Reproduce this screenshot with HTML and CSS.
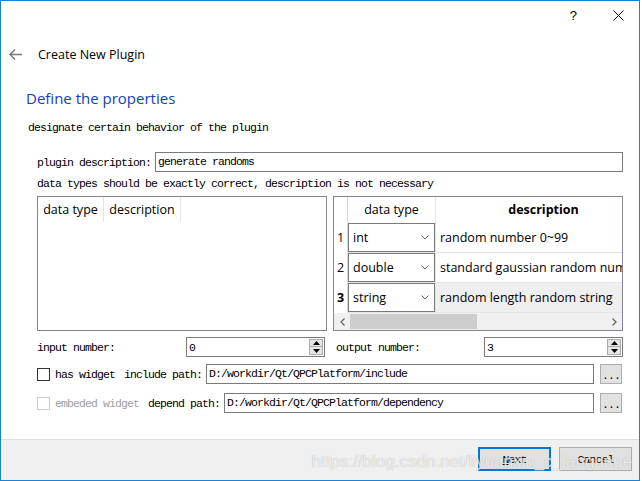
FILE: index.html
```html
<!DOCTYPE html>
<html>
<head>
<meta charset="utf-8">
<link rel="stylesheet" href="styles.css">
</head>
<body>
<div class="window">
  <div class="titlebar">
    <span class="tb-help">?</span>
    <svg class="tb-close" width="11" height="11" viewBox="0 0 11 11"><path d="M0.5 0.5 L10.5 10.5 M10.5 0.5 L0.5 10.5" stroke="#000" stroke-width="1" fill="none"/></svg>
  </div>
  <div class="nav">
    <svg class="back" width="13" height="11" viewBox="0 0 13 11"><path d="M1 5.5 H13 M6 0.5 L1 5.5 L6 10.5" stroke="#7a7a7a" stroke-width="1.5" fill="none"/></svg>
    <span class="nav-title">Create New Plugin</span>
  </div>
  <h1 class="heading">Define the properties</h1>
  <p class="subtitle mono">designate certain behavior of the plugin</p>
  <div class="form">
    <div class="desc-row">
      <span class="mono">plugin description:</span>
      <div class="input mono">generate randoms</div>
    </div>
    <div class="note mono">data types should be exactly correct, description is not necessary</div>
    <div class="tables">
      <div class="tbl">
        <div class="lt-head">
          <div class="lt-h1">data type</div>
          <div class="lt-h2">description</div>
        </div>
      </div>
      <div class="tbl rt">
        <div class="rt-head">
          <div class="rt-corner"></div>
          <div class="rt-c1">data type</div>
          <div class="rt-c2">description</div>
        </div>
        <div class="rt-row">
          <div class="rt-v">1</div>
          <div class="rt-combo-cell"><div class="combo"><span>int</span><svg width="8" height="5" viewBox="0 0 8 5"><path d="M0.5 0.5 L4 4 L7.5 0.5" stroke="#6b6b6b" stroke-width="1" fill="none"/></svg></div></div>
          <div class="rt-desc">random number 0~99</div>
        </div>
        <div class="rt-row">
          <div class="rt-v">2</div>
          <div class="rt-combo-cell"><div class="combo"><span>double</span><svg width="8" height="5" viewBox="0 0 8 5"><path d="M0.5 0.5 L4 4 L7.5 0.5" stroke="#6b6b6b" stroke-width="1" fill="none"/></svg></div></div>
          <div class="rt-desc">standard gaussian random number</div>
        </div>
        <div class="rt-row current">
          <div class="rt-v">3</div>
          <div class="rt-combo-cell"><div class="combo"><span>string</span><svg width="8" height="5" viewBox="0 0 8 5"><path d="M0.5 0.5 L4 4 L7.5 0.5" stroke="#6b6b6b" stroke-width="1" fill="none"/></svg></div></div>
          <div class="rt-desc">random length random string</div>
        </div>
        <div class="hscroll">
          <div class="sb-btn"><svg width="5" height="8" viewBox="0 0 5 8"><path d="M4.5 0.5 L1 4 L4.5 7.5" stroke="#606060" stroke-width="1.2" fill="none"/></svg></div>
          <div class="sb-thumb"></div>
          <div class="sb-track"></div>
          <div class="sb-btn"><svg width="5" height="8" viewBox="0 0 5 8"><path d="M0.5 0.5 L4 4 L0.5 7.5" stroke="#606060" stroke-width="1.2" fill="none"/></svg></div>
        </div>
      </div>
    </div>
    <div class="spin-row">
      <div class="spin-cell">
        <span class="mono">input number:</span>
        <div class="spin left-spin"><span class="mono">0</span>
          <div class="spin-btns">
            <div class="spin-b"><svg width="7" height="4" viewBox="0 0 7 4"><path d="M0 4 L3.5 0 L7 4 Z" fill="#000"/></svg></div>
            <div class="spin-b"><svg width="7" height="4" viewBox="0 0 7 4"><path d="M0 0 L3.5 4 L7 0 Z" fill="#000"/></svg></div>
          </div>
        </div>
      </div>
      <div class="spin-cell">
        <span class="mono out-label">output number:</span>
        <div class="spin"><span class="mono">3</span>
          <div class="spin-btns">
            <div class="spin-b"><svg width="7" height="4" viewBox="0 0 7 4"><path d="M0 4 L3.5 0 L7 4 Z" fill="#000"/></svg></div>
            <div class="spin-b"><svg width="7" height="4" viewBox="0 0 7 4"><path d="M0 0 L3.5 4 L7 0 Z" fill="#000"/></svg></div>
          </div>
        </div>
      </div>
    </div>
    <div class="path-row first">
      <span class="check"></span>
      <span class="mono">has widget</span>
      <span class="mono path-label">include path:</span>
      <div class="input mono">D:/workdir/Qt/QPCPlatform/include</div>
      <div class="dots mono">...</div>
    </div>
    <div class="path-row second">
      <span class="check disabled"></span>
      <span class="mono disabled-text">embeded widget</span>
      <span class="mono path-label">depend path:</span>
      <div class="input mono">D:/workdir/Qt/QPCPlatform/dependency</div>
      <div class="dots mono">...</div>
    </div>
  </div>
  <div class="spacer"></div>
  <div class="footer">
    <div class="btn default mono"><span><u>N</u>ext</span></div>
    <div class="btn mono">Cancel</div>
  </div>
  <div class="watermark">https://blog.csdn.net/liyuanxin_c_language</div>
</div>
</body>
</html>
```

FILE: styles.css
```css
* { box-sizing: border-box; }
html, body { margin: 0; padding: 0; background: #fff; }

.window {
  width: 640px;
  height: 481px;
  border: 1px solid #1883d7;
  display: flex;
  flex-direction: column;
  position: relative;
  overflow: hidden;
  background: #fff;
  color: #000;
  font-family: "Open Sans", "Noto Sans", sans-serif;
  font-size: 12.5px;
}

.mono {
  font-family: "Liberation Mono", "DejaVu Sans Mono", monospace;
  font-size: 11.5px;
  letter-spacing: -0.9px;
  white-space: pre;
}

.titlebar {
  height: 29px;
  flex: none;
  display: flex;
  justify-content: flex-end;
  align-items: center;
  padding-right: 15px;
}
.tb-help {
  font-family: "Liberation Sans", sans-serif;
  font-size: 13px;
  margin-right: 36px;
  line-height: 13px;
}

.nav {
  height: 48px;
  flex: none;
  display: flex;
  align-items: center;
  padding-left: 8px;
}
.back { margin-right: 16px; }
.nav-title { font-size: 12.5px; }

.heading {
  margin: 0;
  height: 40px;
  flex: none;
  line-height: 40px;
  padding-left: 25px;
  font-size: 15px;
  font-weight: normal;
  color: #1240c0;
}

.subtitle {
  margin: 0;
  height: 20px;
  flex: none;
  line-height: 20px;
  padding-left: 27px;
}

.form {
  flex: none;
  margin-left: 36px;
  width: 586px;
  margin-top: 14px;
}

.desc-row {
  height: 20px;
  display: flex;
  align-items: center;
  gap: 4px;
}

.input {
  flex: 1;
  height: 20px;
  border: 1px solid #7a7a7a;
  padding-left: 2px;
  line-height: 18px;
  background: #fff;
  overflow: hidden;
}

.note {
  height: 24px;
  line-height: 24px;
}

.tables {
  display: grid;
  grid-template-columns: 290px 290px;
  gap: 6px;
  height: 135px;
}

.tbl {
  border: 1px solid #828790;
  background: #fff;
  overflow: hidden;
}

.lt-head {
  display: flex;
  height: 25px;
}
.lt-h1, .lt-h2 {
  line-height: 25px;
  text-align: center;
  border-right: 1px solid #e5e5e5;
}
.lt-h1 { width: 66px; }
.lt-h2 { width: 77px; }

.rt { display: flex; flex-direction: column; }
.rt-head {
  display: flex;
  height: 26px;
  flex: none;
}
.rt-corner {
  width: 14px;
  flex: none;
  border-right: 1px solid #d9d9d9;
}
.rt-c1 {
  width: 88px;
  flex: none;
  text-align: center;
  line-height: 26px;
  border-right: 1px solid #e5e5e5;
}
.rt-c2 {
  width: 215px;
  flex: none;
  text-align: center;
  line-height: 26px;
  font-weight: bold;
}

.rt-row {
  display: flex;
  height: 30px;
  flex: none;
}
.rt-v {
  width: 14px;
  flex: none;
  text-align: center;
  line-height: 30px;
  border-right: 1px solid #d9d9d9;
}
.current .rt-v { font-weight: bold; }
.rt-combo-cell {
  width: 88px;
  flex: none;
  border-right: 1px solid #e5e5e5;
  border-bottom: 1px solid #e5e5e5;
}
.combo {
  height: 29px;
  border: 1px solid #7a7a7a;
  display: flex;
  align-items: center;
  justify-content: space-between;
  padding: 0 5px 0 4px;
  background: #fff;
}
.combo svg { flex: none; }
.rt-desc {
  width: 215px;
  flex: none;
  padding-left: 4px;
  line-height: 29px;
  white-space: nowrap;
  overflow: hidden;
  border-bottom: 1px solid #e5e5e5;
}
.current .rt-desc { background: #efefef; }

.hscroll {
  height: 17px;
  flex: none;
  display: flex;
  align-items: center;
  background: #f0f0f0;
}
.sb-btn {
  width: 16px;
  height: 17px;
  flex: none;
  display: flex;
  align-items: center;
  justify-content: center;
}
.sb-thumb {
  width: 127px;
  height: 15px;
  flex: none;
  background: #cdcdcd;
}
.sb-track { flex: 1; }

.spin-row {
  margin-top: 6px;
  height: 20px;
  display: grid;
  grid-template-columns: 290px 290px;
  gap: 6px;
}
.spin-cell {
  display: flex;
  align-items: center;
  justify-content: space-between;
}
.out-label { padding-left: 3px; }
.spin {
  width: 139px;
  height: 20px;
  border: 1px solid #7a7a7a;
  display: flex;
  align-items: center;
  justify-content: space-between;
  padding: 0 1px 0 2px;
}
.left-spin { margin-right: 2px; }
.spin-btns {
  display: flex;
  flex-direction: column;
}
.spin-b {
  width: 14px;
  height: 8px;
  background: #e5e5e5;
  border: 1px solid #adadad;
  display: flex;
  align-items: center;
  justify-content: center;
}
.spin-b + .spin-b { border-top: none; }

.path-row {
  height: 20px;
  display: flex;
  align-items: center;
}
.path-row.first { margin-top: 7px; }
.path-row.second { margin-top: 9px; }
.check {
  width: 13px;
  height: 13px;
  border: 1px solid #333;
  background: #fff;
  margin-right: 5px;
  flex: none;
}
.check.disabled { border-color: #cccccc; }
.disabled-text { color: #a0a0a0; }
.path-label { margin-left: 9px; margin-right: 4px; }
.dots {
  width: 22px;
  height: 20px;
  flex: none;
  margin-left: 6px;
  margin-right: 1px;
  background: #e1e1e1;
  border: 1px solid #adadad;
  text-align: center;
  line-height: 22px;
}

.spacer { flex: 1; }

.footer {
  height: 41px;
  flex: none;
  border-top: 1px solid #dfdfdf;
  background: #f0f0f0;
  display: flex;
  justify-content: flex-end;
  align-items: flex-start;
  padding-top: 7px;
  padding-right: 7px;
  gap: 8px;
}
.btn {
  width: 73px;
  height: 24px;
  background: #e1e1e1;
  border: 1px solid #adadad;
  display: flex;
  align-items: center;
  justify-content: center;
}
.btn.default { border: 2px solid #0078d7; }

.watermark {
  position: absolute;
  right: 7px;
  bottom: 8px;
  font-family: "Liberation Sans", Arial, sans-serif;
  font-size: 17px;
  color: rgba(255, 255, 255, 0.75);
  text-shadow: 0 0 1px rgba(120, 120, 120, 0.6);
  white-space: nowrap;
  pointer-events: none;
}
```
